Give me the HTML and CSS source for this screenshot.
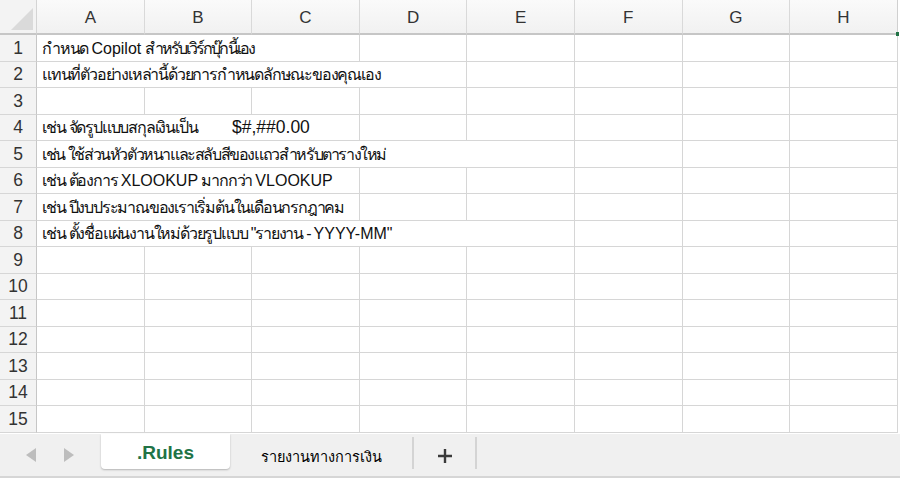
FILE: index.html
```html
<!DOCTYPE html>
<html lang="th">
<head>
<meta charset="utf-8">
<title>Sheet</title>
<link rel="stylesheet" href="styles.css">
</head>
<body>
<div class="app">
  <div class="sheet">
    <div class="corner"><span class="tri"></span></div>
    <div class="ch">A</div><div class="ch">B</div><div class="ch">C</div><div class="ch">D</div><div class="ch">E</div><div class="ch">F</div><div class="ch">G</div><div class="ch last">H<span class="sel"></span></div>

    <div class="rh">1</div><div class="c s3"><span class="t">กำหนด <span class="lat">Copilot</span> <span class="nr">สำหรับเวิร์กบุ๊กนี้เอง</span></span></div><div class="c"></div><div class="c"></div><div class="c"></div><div class="c"></div><div class="c"></div>
    <div class="rh">2</div><div class="c s4"><span class="t">แทนที่ตัวอย่างเหล่านี้ด้วยการกำหนดลักษณะของคุณเอง</span></div><div class="c"></div><div class="c"></div><div class="c"></div><div class="c"></div>
    <div class="rh">3</div><div class="c"></div><div class="c"></div><div class="c"></div><div class="c"></div><div class="c"></div><div class="c"></div><div class="c"></div><div class="c"></div>
    <div class="rh">4</div><div class="c s3"><span class="t"><span class="lbl">เช่น จัดรูปแบบสกุลเงินเป็น</span><span class="lat fmt">$#,##0.00</span></span></div><div class="c"></div><div class="c"></div><div class="c"></div><div class="c"></div><div class="c"></div>
    <div class="rh">5</div><div class="c s5"><span class="t tight">เช่น ใช้ส่วนหัวตัวหนาและสลับสีของแถวสำหรับตารางใหม่</span></div><div class="c"></div><div class="c"></div><div class="c"></div>
    <div class="rh">6</div><div class="c s3"><span class="t">เช่น ต้องการ <span class="lat">XLOOKUP</span> มากกว่า <span class="lat">VLOOKUP</span></span></div><div class="c"></div><div class="c"></div><div class="c"></div><div class="c"></div><div class="c"></div>
    <div class="rh">7</div><div class="c s3"><span class="t">เช่น ปีงบประมาณของเราเริ่มต้นในเดือนกรกฎาคม</span></div><div class="c"></div><div class="c"></div><div class="c"></div><div class="c"></div><div class="c"></div>
    <div class="rh">8</div><div class="c s5"><span class="t">เช่น ตั้งชื่อแผ่นงานใหม่ด้วยรูปแบบ "รายงาน - <span class="lat">YYYY-MM</span>"</span></div><div class="c"></div><div class="c"></div><div class="c"></div>
    <div class="rh">9</div><div class="c"></div><div class="c"></div><div class="c"></div><div class="c"></div><div class="c"></div><div class="c"></div><div class="c"></div><div class="c"></div>
    <div class="rh">10</div><div class="c"></div><div class="c"></div><div class="c"></div><div class="c"></div><div class="c"></div><div class="c"></div><div class="c"></div><div class="c"></div>
    <div class="rh">11</div><div class="c"></div><div class="c"></div><div class="c"></div><div class="c"></div><div class="c"></div><div class="c"></div><div class="c"></div><div class="c"></div>
    <div class="rh">12</div><div class="c"></div><div class="c"></div><div class="c"></div><div class="c"></div><div class="c"></div><div class="c"></div><div class="c"></div><div class="c"></div>
    <div class="rh">13</div><div class="c"></div><div class="c"></div><div class="c"></div><div class="c"></div><div class="c"></div><div class="c"></div><div class="c"></div><div class="c"></div>
    <div class="rh">14</div><div class="c"></div><div class="c"></div><div class="c"></div><div class="c"></div><div class="c"></div><div class="c"></div><div class="c"></div><div class="c"></div>
    <div class="rh">15</div><div class="c"></div><div class="c"></div><div class="c"></div><div class="c"></div><div class="c"></div><div class="c"></div><div class="c"></div><div class="c"></div>
  </div>

  <div class="tabbar">
    <div class="nav">
      <svg width="14" height="16" viewBox="0 0 14 16"><path d="M12 1 L2 8 L12 15 Z" fill="#bdbdbd"/></svg>
      <svg width="14" height="16" viewBox="0 0 14 16"><path d="M2 1 L12 8 L2 15 Z" fill="#bdbdbd"/></svg>
    </div>
    <div class="tab active">.Rules</div>
    <div class="tab">รายงานทางการเงิน</div>
    <div class="sep"></div>
    <div class="add">
      <svg width="18" height="18" viewBox="0 0 18 18"><path d="M9 2 V16 M2 9 H16" stroke="#3a3a3a" stroke-width="2.4"/></svg>
    </div>
    <div class="sep"></div>
  </div>
</div>
</body>
</html>
```

FILE: styles.css
```css
html, body {
  margin: 0;
  padding: 0;
  background: #ffffff;
}
body {
  width: 900px;
  height: 479px;
  overflow: hidden;
  font-family: "Liberation Sans", Arial, "Noto Sans", "DejaVu Sans", sans-serif;
  color: #111;
}
.app {
  display: flex;
  flex-direction: column;
  height: 479px;
}
.sheet {
  display: grid;
  grid-template-columns: 37px repeat(8, 107.6px);
  grid-template-rows: 35px repeat(15, 26.53px);
  width: 900px;
}
.corner, .ch, .rh, .c {
  box-sizing: border-box;
}
.corner {
  background: #f3f3f3;
  border-right: 1px solid #d4d4d4;
  border-bottom: 2px solid #c6c6c6;
  position: relative;
}
.tri {
  position: absolute;
  right: 3px;
  bottom: 3px;
  width: 0;
  height: 0;
  border-left: 22px solid transparent;
  border-bottom: 22px solid #dadada;
}
.ch {
  background: linear-gradient(#fafafa, #f1f1f1);
  border-right: 1px solid #d9d9d9;
  border-bottom: 2px solid #c6c6c6;
  display: flex;
  align-items: center;
  justify-content: center;
  font-size: 17px;
  color: #333;
  position: relative;
  padding-top: 2px;
}
.ch.last {
  border-right: 1px solid #d0d0d0;
}
.sel {
  position: absolute;
  right: -2px;
  bottom: -3px;
  width: 3px;
  height: 4px;
  background: #217346;
}
.rh {
  background: #f3f3f3;
  border-right: 1px solid #c6c6c6;
  border-bottom: 1px solid #d6d6d6;
  display: flex;
  align-items: center;
  justify-content: center;
  font-size: 17.5px;
  color: #333;
  padding-top: 1px;
}
.c {
  border-right: 1px solid #d6d6d6;
  border-bottom: 1px solid #d6d6d6;
  background: #fff;
  display: flex;
  align-items: center;
  padding-left: 5px;
  font-size: 16px;
  white-space: nowrap;
  overflow: hidden;
  padding-top: 1px;
}
.t {
  letter-spacing: -1.2px;
  white-space: pre;
}
.t.tight {
  letter-spacing: -1.4px;
}
.nr {
  letter-spacing: -1.9px;
}
.lat {
  letter-spacing: normal;
}
.s3 { grid-column: span 3; }
.s4 { grid-column: span 4; }
.s5 { grid-column: span 5; }
.lbl {
  display: inline-block;
  width: 190px;
}
.fmt {
  font-size: 17.5px;
  color: #111;
}
.tabbar {
  height: 42px;
  margin-top: 1px;
  background: #f0f0f0;
  border-bottom: 2px solid #d6d6d6;
  display: flex;
  align-items: stretch;
}
.nav {
  width: 101px;
  display: flex;
  align-items: center;
  gap: 24px;
  padding-left: 24px;
  box-sizing: border-box;
}
.tab {
  width: 129px;
  display: flex;
  align-items: center;
  justify-content: center;
  font-size: 14.5px;
  color: #000;
  padding-top: 3px;
  box-sizing: border-box;
}
.tab.active {
  background: #fff;
  color: #217346;
  font-weight: bold;
  font-size: 19px;
  margin-bottom: 7px;
  border-radius: 0 0 4px 4px;
  box-shadow: 0 1px 2px rgba(0,0,0,0.25);
}
.tab + .tab {
  width: 182px;
}
.sep {
  width: 2px;
  background: #d4d4d4;
  margin: 3px 0 7px;
}
.add {
  width: 61px;
  display: flex;
  align-items: center;
  justify-content: center;
  padding-top: 2px;
}
```
